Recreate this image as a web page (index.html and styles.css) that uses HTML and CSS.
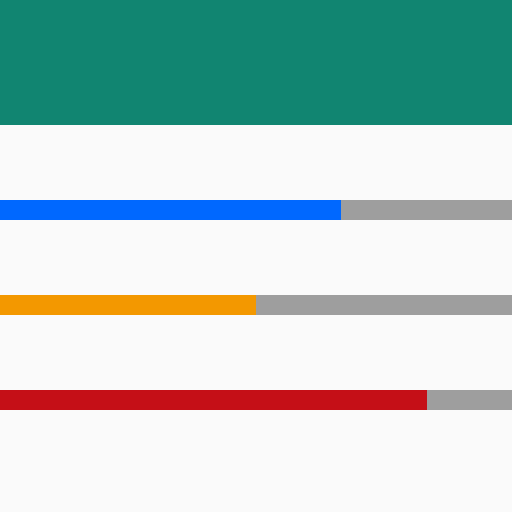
FILE: index.html
```html
<!DOCTYPE html>
<html>
<head>
<meta charset="utf-8">
<link rel="stylesheet" href="styles.css">
</head>
<body>
<header class="header"></header>
<main class="bars">
  <div class="track"><div class="fill blue" style="width:66.667%"></div></div>
  <div class="track"><div class="fill orange" style="width:50%"></div></div>
  <div class="track"><div class="fill red" style="width:83.333%"></div></div>
</main>
</body>
</html>
```
FILE: styles.css
```css
html, body {
  margin: 0;
  padding: 0;
  background: #fafafa;
  width: 512px;
  height: 512px;
  overflow: hidden;
}
.header {
  height: 125px;
  background: #118571;
}
.bars {
  display: flex;
  flex-direction: column;
  gap: 75px;
  padding-top: 75px;
}
.track {
  height: 20px;
  background: #9e9e9e;
  display: flex;
}
.fill {
  height: 100%;
}
.blue { background: #0068ff; }
.orange { background: #f39800; }
.red { background: #c50f17; }
```
